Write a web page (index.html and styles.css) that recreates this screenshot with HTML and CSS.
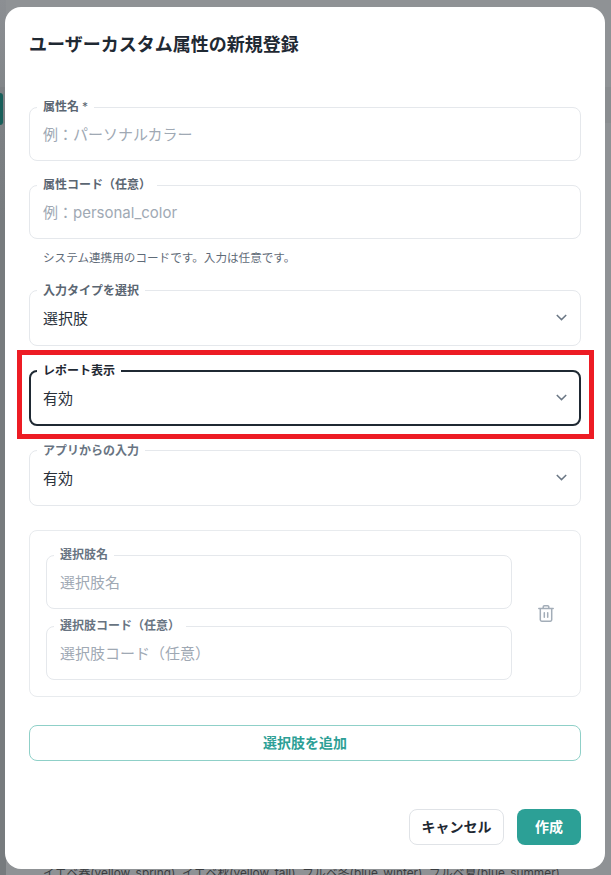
FILE: index.html
```html
<!DOCTYPE html>
<html lang="ja">
<head>
<meta charset="utf-8">
<title>ユーザーカスタム属性の新規登録</title>
<link rel="stylesheet" href="styles.css">
</head>
<body>
<div class="backdrop">
  <div class="peek-side"></div>
  <div class="peek-band"></div>
  <div class="peek-tab"></div>
  <p class="peek-text">イエベ春(yellow_spring), イエベ秋(yellow_fall), ブルベ冬(blue_winter), ブルベ夏(blue_summer)</p>
</div>
<section class="modal">
  <h1 class="title">ユーザーカスタム属性の新規登録</h1>
  <form class="form">
    <div class="field">
      <label class="label">属性名 <span class="req">*</span></label>
      <div class="control placeholder">例&#xFF1A;パーソナルカラー</div>
    </div>
    <div class="field-with-help">
      <div class="field">
        <label class="label">属性コード&#xFF08;任意&#xFF09;</label>
        <div class="control placeholder">例&#xFF1A;personal_color</div>
      </div>
      <p class="help">システム連携用のコードです。入力は任意です。</p>
    </div>
    <div class="field">
      <label class="label label-select">入力タイプを選択</label>
      <div class="control select">選択肢
        <svg class="chevron" viewBox="0 0 11 7"><path d="M.8 1 5.500 5.600 10.200 1"/></svg>
      </div>
    </div>
    <div class="field focused">
      <label class="label label-select">レポート表示</label>
      <div class="control select">有効
        <svg class="chevron" viewBox="0 0 11 7"><path d="M.8 1 5.500 5.600 10.200 1"/></svg>
      </div>
      <div class="highlight"></div>
    </div>
    <div class="field">
      <label class="label label-select muted">アプリからの入力</label>
      <div class="control select">有効
        <svg class="chevron" viewBox="0 0 11 7"><path d="M.8 1 5.500 5.600 10.200 1"/></svg>
      </div>
    </div>
    <div class="group">
      <div class="group-fields">
        <div class="field">
          <label class="label muted">選択肢名</label>
          <div class="control placeholder">選択肢名</div>
        </div>
        <div class="field">
          <label class="label muted">選択肢コード&#xFF08;任意&#xFF09;</label>
          <div class="control placeholder">選択肢コード&#xFF08;任意&#xFF09;</div>
        </div>
      </div>
      <svg class="trash" viewBox="0 0 16 17"><path d="M.8 3.500h14.400M5.200 3.500V2a1.200 1.200 0 0 1 1.200-1.200h3.200A1.200 1.200 0 0 1 10.800 2v1.500M2.300 3.500v11.300a1.400 1.400 0 0 0 1.400 1.400h8.600a1.400 1.400 0 0 0 1.400-1.400V3.500M6.300 7.800v4.400M9.700 7.800v4.400"/></svg>
    </div>
    <button type="button" class="add">選択肢を追加</button>
  </form>
  <footer class="footer">
    <button type="button" class="btn cancel">キャンセル</button>
    <button type="button" class="btn create">作成</button>
  </footer>
</section>
</body>
</html>
```
FILE: styles.css
```css
* { box-sizing: border-box; }
html, body { margin: 0; height: 100%; }
body {
  width: 611px;
  height: 875px;
  overflow: hidden;
  position: relative;
  font-family: Inter, "Noto Sans CJK JP", sans-serif;
  color: #1f2933;
}
.backdrop {
  position: absolute;
  inset: 0;
  background: #8f9295;
}
.peek-side {
  position: absolute;
  left: 0;
  top: 0;
  width: 6px;
  height: 100%;
  background: linear-gradient(180deg, #8c8f93 0, #7d8184 130px, #777b7e 220px, #777b7e 100%);
}
.peek-band {
  position: absolute;
  left: 0;
  right: 0;
  top: 87px;
  height: 36px;
  background: rgba(0, 0, 0, 0.03);
}
.peek-tab {
  position: absolute;
  left: 0;
  top: 93px;
  width: 3px;
  height: 32px;
  background: #185f5a;
  border-radius: 0 4px 4px 0;
}
.peek-text {
  position: absolute;
  left: 43px;
  top: 863px;
  margin: 0;
  font-size: 11.850px;
  line-height: 20px;
  white-space: nowrap;
  color: #3a3d40;
}
.modal {
  position: absolute;
  left: 5px;
  top: 7px;
  width: 600px;
  height: 862px;
  background: #fff;
  border-radius: 16px;
  padding: 24px;
  display: flex;
  flex-direction: column;
}
.title {
  margin: 0;
  font-size: 18px;
  line-height: 28px;
  font-weight: 700;
  color: #1f2933;
}
.form {
  margin-top: 48px;
  display: flex;
  flex-direction: column;
  gap: 24px;
  flex: 1;
}
.field { position: relative; }
.field-with-help { display: flex; flex-direction: column; }
.label {
  position: absolute;
  left: 8px;
  top: -8px;
  padding: 0 6px;
  background: #fff;
  font-size: 12px;
  line-height: 16px;
  font-weight: 600;
  color: #5b6672;
}
.label-select { top: -7px; }
.label.muted { color: #687482; }
.req { font-weight: 400; }
.control {
  height: 54px;
  padding: 0 13px 2px;
  display: flex;
  align-items: center;
  border: 1px solid #e5e8ec;
  border-radius: 8px;
  font-size: 15px;
  color: #2a323b;
  background: #fff;
}
.placeholder { color: #a0a9b4; }
.select { justify-content: space-between; height: 56px; }
.chevron {
  width: 11px;
  height: 7px;
  fill: none;
  stroke: #6b7785;
  stroke-width: 1.500;
}
.help {
  margin: 11px 0 0;
  padding-left: 14px;
  font-size: 11.600px;
  line-height: 16px;
  color: #5f6b78;
}
.focused .label { color: #1f2933; }
.focused .control { border: 2px solid #1f2933; padding: 0 12px 2px; }
.highlight {
  position: absolute;
  left: -12px;
  right: -13px;
  top: -20px;
  bottom: -13px;
  border: 5px solid #ed1c24;
  pointer-events: none;
}
.group {
  height: 167px;
  border: 1px solid #e8ebee;
  border-radius: 8px;
  padding: 16px 26px 16px 16px;
  display: flex;
  align-items: center;
  gap: 26px;
}
.group-fields {
  flex: 1;
  margin-top: 8px;
  display: flex;
  flex-direction: column;
  gap: 17px;
}
.trash {
  width: 16px;
  height: 17px;
  fill: none;
  stroke: #a3adb8;
  stroke-width: 1.500;
  stroke-linecap: round;
  stroke-linejoin: round;
}
.add {
  height: 36px;
  margin-top: 4px;
  padding-bottom: 3px;
  background: #fff;
  border: 1px solid #8fd0c8;
  border-radius: 8px;
  font: inherit;
  font-size: 14px;
  font-weight: 700;
  color: #2d9f96;
}
.footer {
  display: flex;
  justify-content: flex-end;
  gap: 13px;
}
.btn {
  height: 36px;
  padding: 0 0 3px;
  border-radius: 8px;
  font: inherit;
  font-size: 14px;
  font-weight: 700;
}
.cancel {
  width: 95px;
  background: #fff;
  border: 1px solid #e0e3e7;
  color: #1f2933;
}
.create {
  width: 64px;
  background: #2ca096;
  border: 0;
  color: #fff;
}
```
